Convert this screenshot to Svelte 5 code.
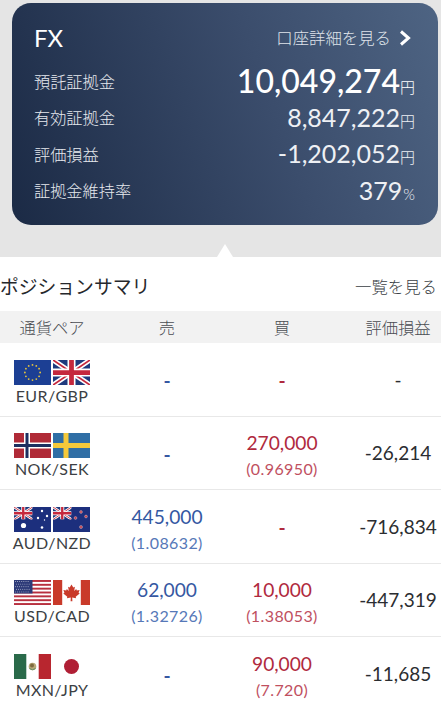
<script>
  const rows = [
    { pair: 'EUR/GBP', flags: ['eu', 'gb'], sell: null, buy: null, pnl: '-' },
    { pair: 'NOK/SEK', flags: ['no', 'se'], sell: null, buy: { qty: '270,000', rate: '(0.96950)' }, pnl: '-26,214' },
    { pair: 'AUD/NZD', flags: ['au', 'nz'], sell: { qty: '445,000', rate: '(1.08632)' }, buy: null, pnl: '-716,834' },
    { pair: 'USD/CAD', flags: ['us', 'ca'], sell: { qty: '62,000', rate: '(1.32726)' }, buy: { qty: '10,000', rate: '(1.38053)' }, pnl: '-447,319' },
    { pair: 'MXN/JPY', flags: ['mx', 'jp'], sell: null, buy: { qty: '90,000', rate: '(7.720)' }, pnl: '-11,685' }
  ];

  const euStars = Array.from({ length: 12 }, (_, i) => {
    const a = (i * Math.PI) / 6;
    return { x: 18.5 + Math.sin(a) * 7.6, y: 12.5 - Math.cos(a) * 7.6 };
  });
  const usStripes = [0, 2, 4, 6, 8, 10, 12];
  const usStars = [];
  for (let r = 0; r < 5; r++) for (let c = 0; c < 7; c++) usStars.push({ x: 1.5 + c * 2.1 + (r % 2), y: 1.5 + r * 2.6 });
</script>

{#snippet unionJack(w, h)}
  <rect width={w} height={h} fill="#1f3a7d" />
  <path d="M0 0L{w} {h}M{w} 0L0 {h}" stroke="#fff" stroke-width={h * 0.2} />
  <path d="M0 0L{w} {h}M{w} 0L0 {h}" stroke="#c5283d" stroke-width={h * 0.07} />
  <path d="M{w / 2} 0V{h}M0 {h / 2}H{w}" stroke="#fff" stroke-width={h * 0.32} />
  <path d="M{w / 2} 0V{h}M0 {h / 2}H{w}" stroke="#c5283d" stroke-width={h * 0.19} />
{/snippet}

{#snippet flag(code)}
  <svg class="flag" viewBox="0 0 37 25" aria-hidden="true">
    {#if code === 'eu'}
      <rect width="37" height="25" fill="#1c3f94" />
      {#each euStars as s}<circle cx={s.x} cy={s.y} r="0.9" fill="#e8c63c" />{/each}
    {:else if code === 'gb'}
      {@render unionJack(37, 25)}
    {:else if code === 'no'}
      <rect width="37" height="25" fill="#b02a37" />
      <path d="M13 0V25M0 12.5H37" stroke="#fff" stroke-width="6" />
      <path d="M13 0V25M0 12.5H37" stroke="#1c2f60" stroke-width="3" />
    {:else if code === 'se'}
      <rect width="37" height="25" fill="#2f6ea5" />
      <path d="M13 0V25M0 12.5H37" stroke="#f5c93a" stroke-width="5" />
    {:else if code === 'au' || code === 'nz'}
      <rect width="37" height="25" fill="#1c2f7d" />
      <svg x="0" y="0" width="18.5" height="12.5" viewBox="0 0 37 25">{@render unionJack(37, 25)}</svg>
      {#if code === 'au'}
        <circle cx="9.5" cy="18.5" r="2.6" fill="#fff" />
        <circle cx="28" cy="4" r="1.2" fill="#fff" />
        <circle cx="33" cy="9" r="1.2" fill="#fff" />
        <circle cx="24" cy="11" r="1.2" fill="#fff" />
        <circle cx="28" cy="20.5" r="1.3" fill="#fff" />
        <circle cx="30.5" cy="13" r="0.7" fill="#fff" />
      {:else}
        <circle cx="28" cy="5" r="1.4" fill="#c5404f" stroke="#ddd" stroke-width="0.4" />
        <circle cx="22.5" cy="11" r="1.4" fill="#c5404f" stroke="#ddd" stroke-width="0.4" />
        <circle cx="33" cy="9.5" r="1.4" fill="#c5404f" stroke="#ddd" stroke-width="0.4" />
        <circle cx="28" cy="20" r="1.5" fill="#c5404f" stroke="#ddd" stroke-width="0.4" />
      {/if}
    {:else if code === 'us'}
      <rect width="37" height="25" fill="#fff" />
      {#each usStripes as i}<rect y={i * 1.923} width="37" height="1.923" fill="#b8303f" />{/each}
      <rect width="18.5" height="13.5" fill="#2d3a78" />
      {#each usStars as s}<circle cx={s.x} cy={s.y} r="0.45" fill="#fff" />{/each}
    {:else if code === 'ca'}
      <rect width="37" height="25" fill="#fff" />
      <rect width="9.2" height="25" fill="#c93a2a" />
      <rect x="27.8" width="9.2" height="25" fill="#c93a2a" />
      <path d="M18.5 4.5l1.8 3 1.6-.8-.7 4.3 2-2 .6 1.4 2.8-.5-1 2.8 1.1.7-4 3.3.4 1.5-3.9-.6.2 3.6h-1.8l.2-3.6-3.9.6.4-1.5-4-3.3 1.1-.7-1-2.8 2.8.5.6-1.4 2 2-.7-4.3 1.6.8z" fill="#c93a2a" />
    {:else if code === 'mx'}
      <rect width="37" height="25" fill="#fff" />
      <rect width="12.3" height="25" fill="#2a6a4a" />
      <rect x="24.7" width="12.3" height="25" fill="#b8262f" />
      <circle cx="18.5" cy="12.5" r="3.8" fill="#b9a878" />
      <circle cx="18" cy="11.5" r="2" fill="#7d6a3f" />
      <path d="M15.5 14.5q3 2.5 6 0" stroke="#5f8f6a" stroke-width="1" fill="none" />
    {:else if code === 'jp'}
      <rect width="37" height="25" fill="#fff" />
      <circle cx="18.5" cy="12.5" r="7.5" fill="#b01f35" />
    {/if}
  </svg>
{/snippet}

{#snippet trade(t, cls)}
  {#if t}
    <div class="cell trade {cls}"><span class="qty">{t.qty}</span><span class="rate">{t.rate}</span></div>
  {:else}
    <div class="cell trade {cls}"><span class="qty dash">-</span></div>
  {/if}
{/snippet}

<div class="page">
  <section class="top">
    <div class="card">
      <div class="card-head">
        <span class="fx">FX</span>
        <span class="detail">口座詳細を見る
          <svg viewBox="0 0 12 16" aria-hidden="true"><path d="M2 1.5L9.5 8L2 14.5" fill="none" stroke="#fff" stroke-width="3" /></svg>
        </span>
      </div>
      <dl>
        <div class="line main"><dt>預託証拠金</dt><dd>10,049,274<small>円</small></dd></div>
        <div class="line"><dt>有効証拠金</dt><dd>8,847,222<small>円</small></dd></div>
        <div class="line"><dt>評価損益</dt><dd>-1,202,052<small>円</small></dd></div>
        <div class="line"><dt>証拠金維持率</dt><dd>379<small class="pct">%</small></dd></div>
      </dl>
    </div>
    <div class="pointer"></div>
  </section>

  <section class="summary">
    <div class="summary-head">
      <h2>ポジションサマリ</h2>
      <span>一覧を見る</span>
    </div>
    <div class="row thead">
      <div>通貨ペア</div><div>売</div><div>買</div><div class="pnl-col">評価損益</div>
    </div>
    {#each rows as row}
      <div class="row item">
        <div class="cell pair">
          <div class="flags">{@render flag(row.flags[0])}{@render flag(row.flags[1])}</div>
          <span>{row.pair}</span>
        </div>
        {@render trade(row.sell, 'sell')}
        {@render trade(row.buy, 'buy')}
        <div class="cell pnl pnl-col">{row.pnl}</div>
      </div>
    {/each}
  </section>
</div>

<style>
  :global(*) { box-sizing: border-box; }
  :global(body) { margin: 0; background: #fff; font-family: Lato, "Noto Sans CJK JP", sans-serif; }
  .page { width: 441px; height: 710px; overflow: hidden; }
  .top { background: #e5e5e5; height: 257px; padding: 3px 3px 0 12px; position: relative; }
  .card { height: 222px; border-radius: 19px; padding: 0 23px; color: #fff; background: linear-gradient(70deg, #1b2a45 0%, #3b4d6c 60%, #4e6483 100%); }
  .card-head { display: flex; justify-content: space-between; align-items: center; height: 60px; padding-top: 9px; }
  .fx { font-size: 24px; margin-left: -1px; line-height: 1; }
  .detail { display: flex; align-items: center; font-size: 16.4px; color: #dfe3ea; font-family: "Noto Sans CJK JP", sans-serif; font-weight: 300; margin-right: 4px; gap: 8px; line-height: 1; }
  .detail svg { width: 12px; height: 16px; }
  dl { margin: 0; }
  .line { display: flex; justify-content: space-between; align-items: center; height: 36.4px; }
  dt { font-size: 16.2px; color: #e6e9ee; font-family: "Noto Sans CJK JP", sans-serif; font-weight: 300; line-height: 1; margin-left: -1px; }
  dd { margin: 0; font-size: 25px; color: #eef0f4; white-space: nowrap; line-height: 1; }
  .main dd { font-size: 32px; font-weight: 500; color: #fff; }
  small { font-size: 15px; font-family: "Noto Sans CJK JP", sans-serif; font-weight: 300; }
  small.pct { font-family: Lato, sans-serif; font-size: 15px; margin-left: 1px; }
  .pointer { position: absolute; left: 217px; bottom: 0; width: 0; height: 0; border-left: 8px solid transparent; border-right: 8px solid transparent; border-bottom: 13px solid #fff; }
  .summary-head { display: flex; justify-content: space-between; align-items: center; height: 54px; padding: 6px 4px 2px 0; }
  h2 { margin: 0; font-size: 18.8px; font-weight: 400; color: #26282c; font-family: "Noto Sans CJK JP", sans-serif; line-height: 1; }
  .summary-head span { font-size: 16.4px; font-weight: 300; color: #3b3f45; font-family: "Noto Sans CJK JP", sans-serif; line-height: 1; }
  .row { display: grid; grid-template-columns: 104px 126px 104px 107px; }
  .thead { background: #f2f2f2; height: 32px; align-items: center; text-align: center; font-size: 16.3px; font-weight: 300; color: #4a4d52; font-family: "Noto Sans CJK JP", sans-serif; }
  .pnl-col { padding-left: 21px; }
  .item { height: 73.5px; border-bottom: 1px solid #e8e8e8; }
  .item:last-child { border-bottom: 0; }
  .cell { display: flex; flex-direction: column; align-items: center; justify-content: center; }
  .pair { padding-top: 7px; }
  .pair span { font-size: 16px; color: #3c3f44; letter-spacing: .4px; line-height: 20px; margin-top: 1px; }
  .flags { display: flex; gap: 2px; }
  .flag { width: 37px; height: 25px; display: block; }
  .trade { padding-top: 6px; }
  .trade .qty { font-size: 19.2px; line-height: 26px; }
  .trade .dash { font-weight: 700; margin-top: -2px; }
  .trade .rate { font-size: 16px; line-height: 25px; letter-spacing: .4px; }
  .sell { color: #3558a2; }
  .sell .rate { color: #5678b8; }
  .buy { color: #b02a3e; }
  .buy .rate { color: #c0505f; }
  .pnl { font-size: 19px; color: #2b2d31; }
</style>
